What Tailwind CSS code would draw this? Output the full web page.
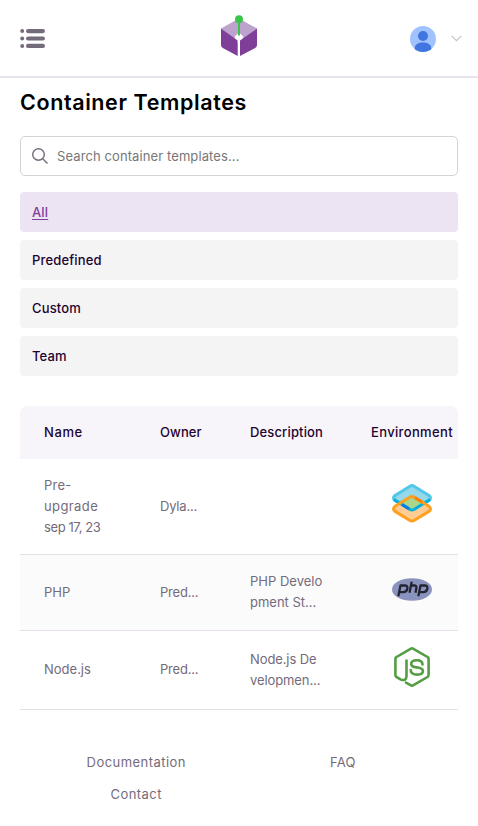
<!DOCTYPE html>
<html lang="en">
<head>
<meta charset="utf-8">
<meta name="viewport" content="width=device-width, initial-scale=1">
<title>Container Templates</title>
<script src="https://cdn.jsdelivr.net/npm/@tailwindcss/browser@4"></script>
</head>
<body class="bg-white font-['Inter',sans-serif] text-[13px] leading-[21px] text-[#746b7b] overflow-hidden">
<header class="grid h-[78px] grid-cols-3 items-center border-b-2 border-[#e9e3ed] pl-5 pr-4">
  <button aria-label="Menu" class="justify-self-start">
    <svg class="block h-[19px] w-[25px]" viewBox="0 0 25 19" fill="#746b7b"><circle cx="2.2" cy="2" r="2"/><circle cx="2.2" cy="9.5" r="2"/><circle cx="2.2" cy="17" r="2"/><rect x="6" width="19" height="4.2" rx="2.1"/><rect x="6" y="7.4" width="19" height="4.2" rx="2.1"/><rect x="6" y="14.8" width="19" height="4.2" rx="2.1"/></svg>
  </button>
  <svg class="mt-[-4px] -ml-[3px] block h-[42px] w-9 justify-self-center" viewBox="0 0 36 42"><path d="M18 3.500 36 13.500 24 23H12L0 13.500Z" fill="#bda2ce"/><path d="M0 13.500 16.700 25.500V41L1.800 33Q0 32 0 30Z M36 13.500 19 25.500V41l15.200-8Q36 32 36 30Z" fill="#7f3f98"/><path d="m18 17.500 4.500 4.200-3.500 3.200V28h-2.200v-3.100l-3.300-3.200Z" fill="#fff"/><path d="M18 4v16.500" stroke="#39c54b" stroke-width="2"/><circle cx="18" cy="4.200" r="4" fill="#39c54b"/></svg>
  <div class="mt-px flex items-center gap-[15px] justify-self-end">
    <svg class="block size-[26px]" viewBox="0 0 26 26"><defs><clipPath id="avatar"><circle cx="13" cy="13" r="13"/></clipPath></defs><g clip-path="url(#avatar)"><path fill="#a0c3ff" d="M0 0h26v26H0z"/><g fill="#4175df"><circle cx="13" cy="10" r="5"/><path d="M4.800 22c0-3.600 3.700-5.500 8.200-5.500s8.200 1.900 8.200 5.500v4H4.800Z"/></g></g></svg>
    <svg class="block h-[7px] w-[11px]" viewBox="0 0 11 7" fill="none" stroke="#c5c3c7" stroke-width="1.200"><path d="m.7.8 4.800 4.800L10.300.8"/></svg>
  </div>
</header>
<main class="px-5 pt-2">
  <h1 class="text-[21.500px] leading-[32px] font-semibold tracking-[0.600px] text-black whitespace-nowrap">Container Templates</h1>
  <div class="mt-[18px] flex h-10 items-center gap-[9px] rounded-[5px] border border-[#d5d1d9] pl-[11px]">
    <svg class="block size-4" viewBox="0 0 16 16" fill="none" stroke="#746b7b" stroke-width="1.400"><circle cx="6.500" cy="6.500" r="5.800"/><path d="m10.700 10.700 4.800 4.800"/></svg>
    <span class="tracking-[0.100px] text-[#777]">Search container templates...</span>
  </div>
  <nav class="mt-4 grid gap-2 font-medium tracking-[0.150px] text-[#1e0331]">
    <a class="h-10 rounded-[4px] bg-[#ede4f3] px-3 leading-10 text-[#7f3f98] underline underline-offset-2">All</a>
    <a class="h-10 rounded-[4px] bg-[#f4f4f4] px-3 leading-10">Predefined</a>
    <a class="h-10 rounded-[4px] bg-[#f4f4f4] px-3 leading-10">Custom</a>
    <a class="h-10 rounded-[4px] bg-[#f4f4f4] px-3 leading-10">Team</a>
  </nav>
  <section class="mt-[30px]">
    <div class="grid h-[53px] grid-cols-[116px_90px_121px_83px] items-center rounded-t-lg bg-[#f8f5fa] pl-6 font-medium text-[#1e0331]">
      <span class="tracking-[0.600px]">Name</span><span class="tracking-[0.100px]">Owner</span><span class="tracking-[0.150px]">Description</span><span class="tracking-[0.350px]">Environment</span>
    </div>
    <div class="grid h-24 grid-cols-[116px_90px_121px_83px] items-center border-b border-[#e5e0e8] pl-6">
      <span><span class="tracking-[0.200px]">Pre-</span><br><span class="tracking-[0.400px]">upgrade</span><br><span class="tracking-[-0.400px]">sep 17, 23</span></span><span class="tracking-[-0.200px]">Dyla...</span><span></span>
      <svg class="-mt-1.5 -ml-0.5 block h-[39px] w-10 justify-self-center" viewBox="0 0 40 39" stroke-width="3" stroke-linejoin="round"><path d="M18 2.200Q20 1 22 2.200L37 11.500Q40 14 37 16.500L22 25.500Q20 26.500 18 25.500L3 16.500Q0 14 3 11.500Z" fill="#94d8e9" stroke="#52c6e8"/><path d="M18 13Q20 12 22 13L37 22.300Q40 25 37 27.400L22 36.500Q20 37.700 18 36.500L3 27.400Q0 25 3 22.300Z" fill="#ffcc94"/><path d="m20 13 13 7-13 7-13-7Z" fill="#a8d68c"/><path d="M2 15.500 18 25.500Q20 26.500 22 25.500L38 15.500" fill="none" stroke="#00b0e0"/><path d="M18 13Q20 12 22 13L37 22.300Q40 25 37 27.400L22 36.500Q20 37.700 18 36.500L3 27.400Q0 25 3 22.300Z" fill="none" stroke="#ffa01f"/><path d="m23 13.700 7 4.200" stroke="#ff7d00"/><path d="m10 20.500 7 4.300" stroke="#087be6"/></svg>
    </div>
    <div class="grid h-[76px] grid-cols-[116px_90px_121px_83px] items-center border-b border-[#e9dfec] bg-[#fbfbfb] pl-6">
      <span>PHP</span><span class="tracking-[-0.200px]">Pred...</span><span class="-mt-px">PHP Develo<br>pment St...</span>
      <svg class="-mt-1.5 -ml-0.5 block h-[23px] w-10 justify-self-center" viewBox="0 0 40 23"><ellipse cx="20" cy="11.500" rx="20" ry="11.200" fill="#8993be"/><g fill="none" stroke="#232531" stroke-width="2.300" stroke-linejoin="round"><path d="M6.300 18.300 8.500 7.500h4.200q3.300 0 2.600 3.300-.6 3.400-4 3.400H7.500"/><path d="m19.700 3.700-2.200 11M19 7.500h3.300q2.600 0 2.100 2.500l-.9 4.700"/><path d="m26.300 18.300 2.200-10.800h4.200q3.300 0 2.600 3.300-.6 3.400-4 3.400H27.500"/></g></svg>
    </div>
    <div class="grid h-[79px] grid-cols-[116px_90px_121px_83px] items-center border-b border-[#e5e0e8] pl-6">
      <span class="-mt-px">Node.js</span><span class="-mt-px tracking-[-0.200px]">Pred...</span><span class="tracking-[-0.100px]">Node.js De<br>velopmen...</span>
      <svg class="-mt-1.5 -ml-0.5 block h-10 w-9 justify-self-center" viewBox="0 0 36 40" fill="none" stroke="#539e43" stroke-width="2.600" stroke-linejoin="round" stroke-linecap="round"><path d="M12 35.600 17 38.400Q18 39 19 38.400L33.500 30Q34.600 29.400 34.600 28V11.800Q34.600 10.600 33.500 10L19 1.600Q18 1 17 1.600L2.500 10Q1.400 10.600 1.400 11.800V28Q1.400 29.400 2.500 30L6.500 32.300C10.500 34.200 12.500 32.200 12.500 29V13.500"/><path d="M28.500 17.500C28.500 14.500 26.500 13.300 22.800 13.300 19 13.300 17.200 14.600 17.200 17 17.200 19.500 19 20 22.800 20.400 27 20.900 28.900 21.600 28.900 24 28.900 26.500 26.800 27.600 23.200 27.600 18.900 27.600 16.900 26.100 16.700 23"/></svg>
    </div>
  </section>
</main>
<footer class="mt-[42px] grid grid-cols-2 gap-y-[11px] pr-8 pl-[33px] text-center">
  <a class="tracking-[0.450px]">Documentation</a><a class="tracking-[0.200px]">FAQ</a><a class="tracking-[0.450px]">Contact</a>
</footer>
</body>
</html>
